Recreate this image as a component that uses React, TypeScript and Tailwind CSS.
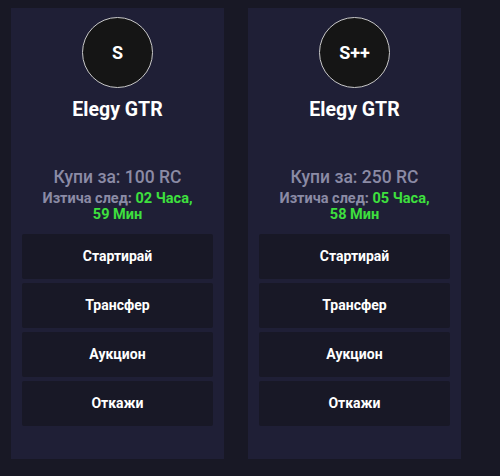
import React from "react";

const cards = [
  { tier: "S", price: "100", hours: "02", mins: "59" },
  { tier: "S++", price: "250", hours: "05", mins: "58" },
];

const actions = ["Стартирай", "Трансфер", "Аукцион", "Откажи"];

export default function App() {
  return (
    <div
      className="w-[500px] h-[476px] bg-[#181825] flex gap-[24px] pl-[11px] pt-[8px]"
      style={{ fontFamily: "Roboto, 'Noto Sans', sans-serif" }}
    >
      {cards.map((c, i) => (
        <div
          key={i}
          className="w-[213px] h-[451px] bg-[#1f1f36] flex flex-col items-center pt-[9px] px-[11px]"
        >
          <div className="w-[71px] h-[71px] rounded-full bg-[#151515] border border-[#c8c8c8] flex items-center justify-center text-white font-bold text-[18px]">
            {c.tier}
          </div>
          <div className="mt-[10px] text-white font-bold text-[19.5px] leading-[24px]">
            Elegy GTR
          </div>
          <div className="mt-[45px] text-[#8b8ba5] font-medium text-[17.5px] leading-[20px]">
            Купи за: {c.price} RC
          </div>
          <div className="mt-[4px] w-[160px] text-center text-[#8b8ba5] font-bold text-[14.5px] leading-[16px]">
            Изтича след:{" "}
            <span className="text-[#3ee03e]">
              {c.hours} Часа, {c.mins} Мин
            </span>
          </div>
          <div className="mt-[11px] w-full flex flex-col gap-[4px]">
            {actions.map((a) => (
              <div
                key={a}
                className="h-[45px] rounded-[2px] bg-[#181826] flex items-center justify-center text-white font-bold text-[14px]"
              >
                {a}
              </div>
            ))}
          </div>
        </div>
      ))}
    </div>
  );
}
